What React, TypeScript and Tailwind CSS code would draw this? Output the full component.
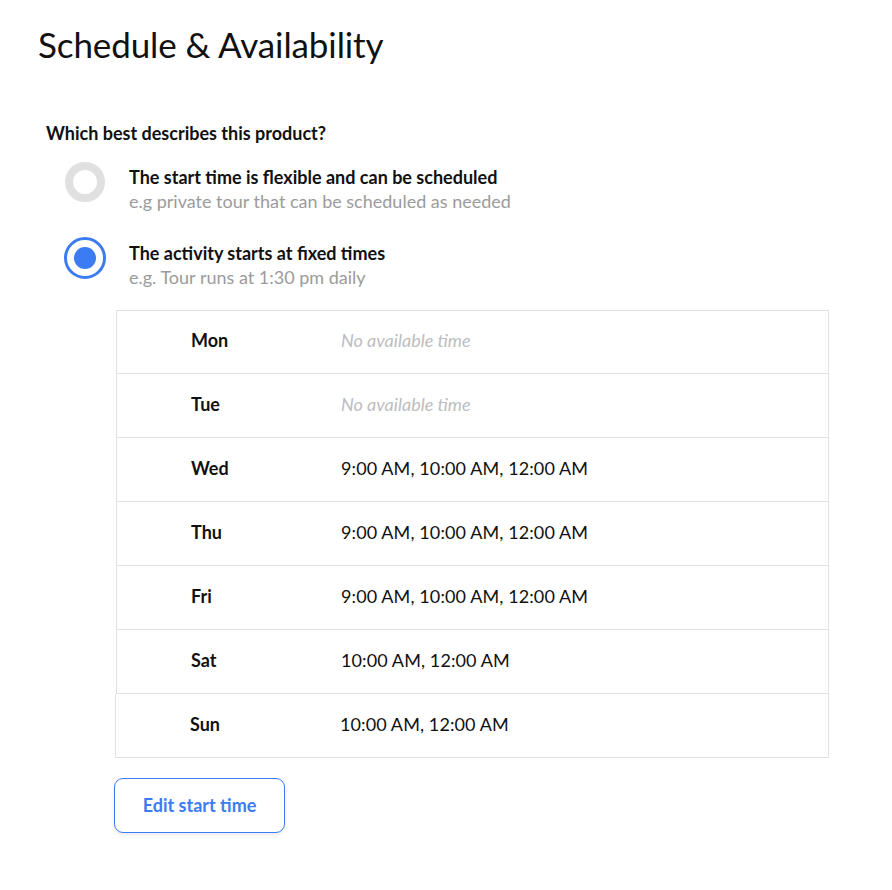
const schedule = [
  { day: 'Mon', times: null },
  { day: 'Tue', times: null },
  { day: 'Wed', times: '9:00 AM, 10:00 AM, 12:00 AM' },
  { day: 'Thu', times: '9:00 AM, 10:00 AM, 12:00 AM' },
  { day: 'Fri', times: '9:00 AM, 10:00 AM, 12:00 AM' },
  { day: 'Sat', times: '10:00 AM, 12:00 AM' },
  { day: 'Sun', times: '10:00 AM, 12:00 AM' },
]

function Radio({ checked }: { checked: boolean }) {
  return (
    <span className="flex size-[42px] shrink-0 items-center justify-center">
      {checked ? (
        <span className="flex size-[42px] items-center justify-center rounded-full border-[3px] border-[#3b7cf4]">
          <span className="size-[22px] rounded-full bg-[#3b7cf4]" />
        </span>
      ) : (
        <span className="size-[40px] rounded-full border-[8px] border-[#e0e0e0]" />
      )}
    </span>
  )
}

function Option({ checked, title, hint }: { checked: boolean; title: string; hint: string }) {
  return (
    <div className="flex items-start gap-[23px]">
      <Radio checked={checked} />
      <div className="pt-[4px]">
        <div className="text-[18px]/[24px] font-bold text-[#111]">{title}</div>
        <div className="text-[18px]/[24px] text-[#9b9b9b]">{hint}</div>
      </div>
    </div>
  )
}

export default function App() {
  return (
    <div className="min-h-[890px] bg-white px-[38px] pt-[20px] font-['Lato','Open_Sans',sans-serif] text-[#111]">
      <h1 className="text-[35px]/[48px] font-normal tracking-[-0.1px]">Schedule &amp; Availability</h1>

      <div className="mt-[53px] pl-[8px] text-[18px]/[24px] font-bold">Which best describes this product?</div>

      <div className="mt-[16px] flex flex-col gap-[24px] pl-[26px]">
        <Option
          checked={false}
          title="The start time is flexible and can be scheduled"
          hint="e.g private tour that can be scheduled as needed"
        />
        <Option checked title="The activity starts at fixed times" hint="e.g. Tour runs at 1:30 pm daily" />
      </div>

      <div className="ml-[78px] mt-[21px] w-[713px]">
        {schedule.map((row, i) => (
          <div
            key={row.day}
            className={`flex h-[64px] items-center border border-[#e2e2e2] pb-[3px] ${i > 0 ? 'border-t-0' : ''} ${row.day === 'Sun' ? '-ml-px' : ''}`}
          >
            <div className="w-[224px] pl-[74px] text-[18px] font-bold">{row.day}</div>
            {row.times ? (
              <div className="text-[18px] tracking-[0.1px]">{row.times}</div>
            ) : (
              <div className="text-[18px] italic text-[#bdbdbd]">No available time</div>
            )}
          </div>
        ))}
      </div>

      <button className="ml-[76px] mt-[20px] h-[55px] w-[171px] rounded-[9px] border border-[#3b7cf4] bg-white text-[18px] font-bold text-[#3b7cf4] shadow-[0_2px_4px_rgba(0,0,0,0.08)]">
        Edit start time
      </button>
    </div>
  )
}
